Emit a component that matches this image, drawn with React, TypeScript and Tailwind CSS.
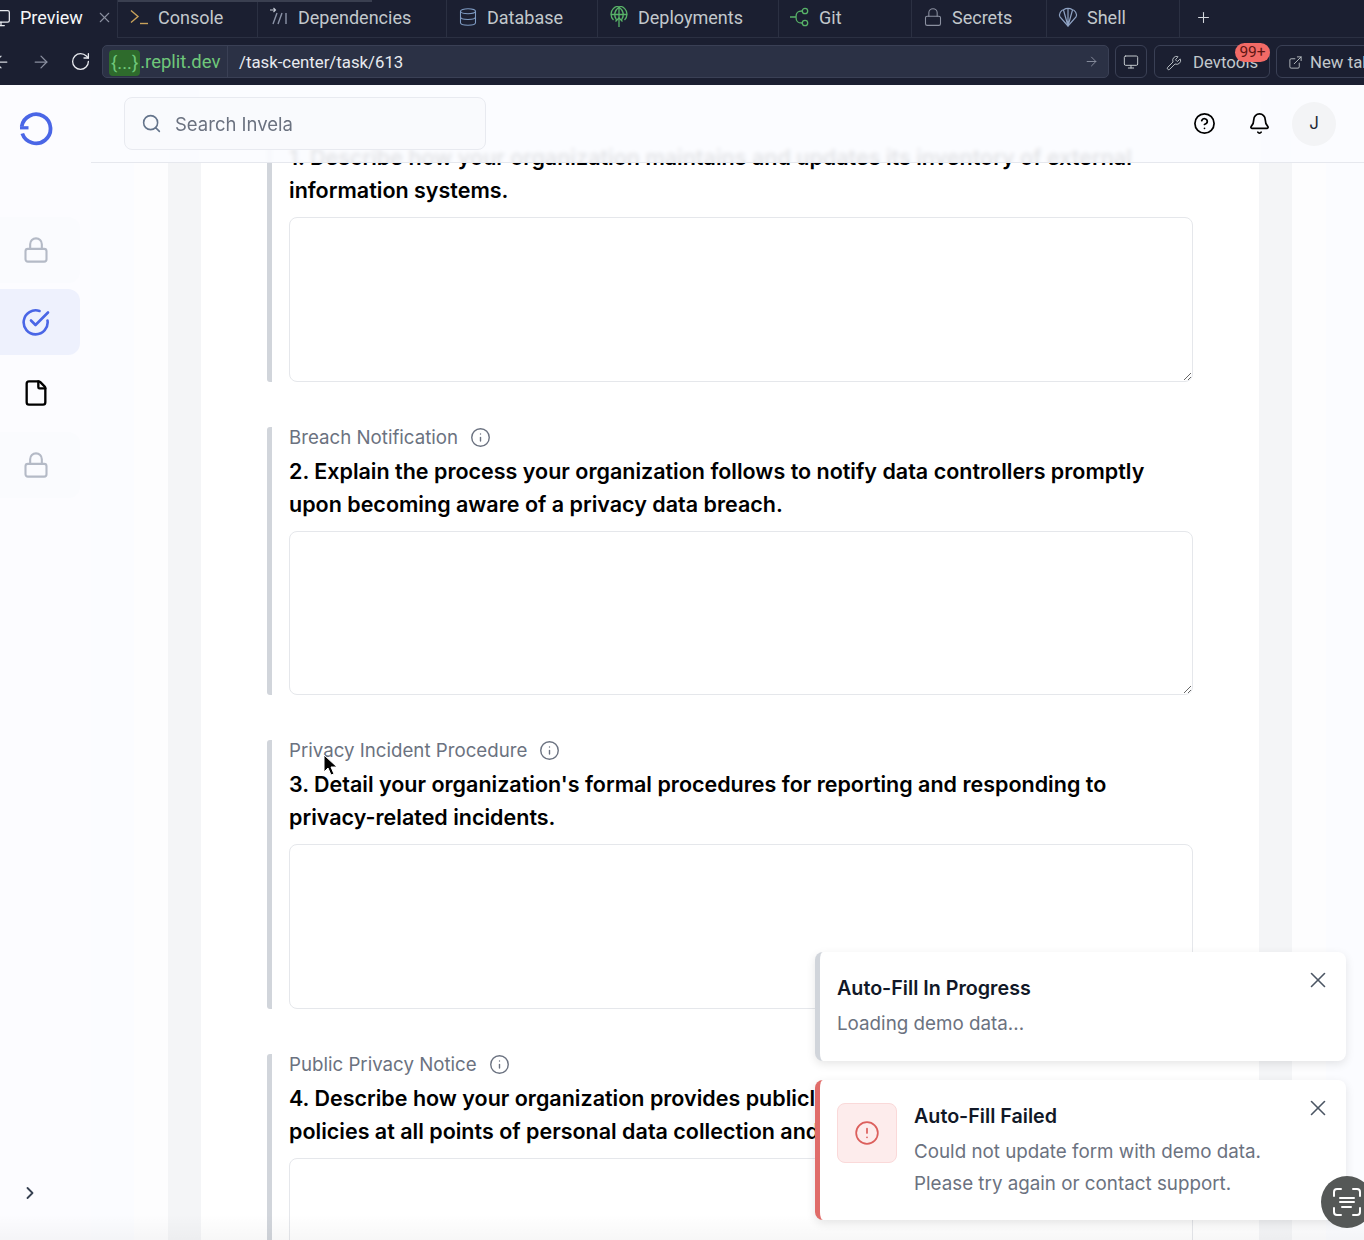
import type { ReactNode } from "react";
import {
  ArrowLeft,
  ArrowRight,
  Bell,
  ChevronRight,
  CircleAlert,
  CircleHelp,
  Database,
  ExternalLink,
  File,
  Info,
  Lock,
  Monitor,
  Plus,
  RotateCw,
  Search,
  Wrench,
  X,
} from "lucide-react";

const questions = [
  {
    label: "Data Inventory",
    text: "1. Describe how your organization maintains and updates its inventory of external information systems.",
  },
  {
    label: "Breach Notification",
    text: "2. Explain the process your organization follows to notify data controllers promptly upon becoming aware of a privacy data breach.",
  },
  {
    label: "Privacy Incident Procedure",
    text: "3. Detail your organization's formal procedures for reporting and responding to privacy-related incidents.",
  },
  {
    label: "Public Privacy Notice",
    text: "4. Describe how your organization provides publicly available and accessible privacy policies at all points of personal data collection and processing.",
  },
];

function ConsoleIcon() {
  return (
    <svg width="20" height="20" viewBox="0 0 20 20" fill="none" stroke="#c9a25a" strokeWidth="1.4">
      <path d="M2 3.5 9 9.5 2 15.5" />
      <path d="M11 16.5h8" />
    </svg>
  );
}

function DependenciesIcon() {
  return (
    <svg width="20" height="20" viewBox="0 0 20 20" fill="none" stroke="#8b93a7" strokeWidth="1.4">
      <path d="M8 6 4 17M13 6 9 17M17 6v11" />
      <path d="M1 3h5M4.500 1 6.500 3 4.500 5" stroke="#c4c9d4" strokeWidth="1.1" />
    </svg>
  );
}

function DeployIcon() {
  return (
    <svg width="20" height="22" viewBox="0 0 20 22" fill="none" stroke="#58b368" strokeWidth="1.3">
      <path d="M4.500 14a8 8 0 1 1 11 0" />
      <path d="M2 8.500h16M10 1v20M10 1c-5 4-5 9-2.500 13M10 1c5 4 5 9 2.500 13" />
      <path d="M6.500 15.500 10 12l3.500 3.500" />
    </svg>
  );
}

function GitIcon() {
  return (
    <svg width="20" height="20" viewBox="0 0 20 20" fill="none" stroke="#58b368" strokeWidth="1.3">
      <path d="M0 10h6M6 10c0-5 2-6 6-6M6 10c0 5 2 6 6 6" />
      <circle cx="15" cy="4" r="2.700" />
      <circle cx="15" cy="16" r="2.700" />
    </svg>
  );
}

function ShellIcon() {
  return (
    <svg width="20" height="20" viewBox="0 0 20 20" fill="none" stroke="#8fa3c4" strokeWidth="1.2">
      <path d="M10 19 2 10C.5 7 3 3 6 2.500 8 1 12 1 14 2.500 17 3 19.500 7 18 10Z" />
      <path d="M10 19 5.500 3M10 19V1.500M10 19l4.500-16" />
    </svg>
  );
}

function LogoMark() {
  return (
    <svg width="34" height="34" viewBox="0 0 34 34" fill="none">
      <path d="M2.700 14.500A14.500 14.500 0 1 1 3.300 21.500" stroke="#4a66e6" strokeWidth="3.800" />
      <path d="M1 14.200h8.500v3.200H1z" fill="#4a66e6" />
    </svg>
  );
}

function CheckIcon() {
  return (
    <svg width="28" height="28" viewBox="0 0 28 28" fill="none" stroke="#4a66e6" strokeWidth="2.600" strokeLinecap="round" strokeLinejoin="round">
      <path d="M25.500 12.500A12 12 0 1 1 17.500 3" />
      <path d="M9 12.500 13.500 17 26 4.500" />
    </svg>
  );
}

function ScanIcon() {
  return (
    <svg width="30" height="30" viewBox="0 0 30 30" fill="none" stroke="#ffffff" strokeWidth="2" strokeLinecap="round">
      <path d="M2 9V5a3 3 0 0 1 3-3h4M21 2h4a3 3 0 0 1 3 3v4M28 21v4a3 3 0 0 1-3 3h-4M9 28H5a3 3 0 0 1-3-3v-4" />
      <path d="M8 11h14M8 15h14M10 20h9" />
    </svg>
  );
}

function Tab({ width, icon, label }: { width: string; icon: ReactNode; label: string }) {
  return (
    <div className={`flex h-[38px] shrink-0 items-center gap-[9px] border-r border-b border-[#2b3042] pb-[3px] pl-[11px] ${width}`}>
      {icon}
      <span className="text-[#c2c8cc]">{label}</span>
    </div>
  );
}

function TopBar() {
  return (
    <div className="relative h-[85px] shrink-0 overflow-hidden bg-[#1b1f31] font-['Roboto',sans-serif] text-[18px]">
      <div className="absolute left-[118px] top-0 h-[2px] w-[254px] bg-[#3a3f50]" />
      <div className="-ml-[11px] flex w-[1375px]">
        <div className="flex h-[38px] w-[129px] shrink-0 items-center gap-[9px] border-r border-[#2b3042] pb-[3px] pl-[2px]">
          <Monitor className="h-[20px] w-[20px] text-[#e8eaef]" strokeWidth={1.500} />
          <span className="text-[#f5f6f8]">Preview</span>
          <X className="ml-[4px] h-[17px] w-[17px] text-[#8b90a0]" strokeWidth={1.500} />
        </div>
        <Tab width="w-[140px]" icon={<ConsoleIcon />} label="Console" />
        <Tab width="w-[189px]" icon={<DependenciesIcon />} label="Dependencies" />
        <Tab width="w-[151px]" icon={<Database className="h-[20px] w-[20px] text-[#7f9cc4]" strokeWidth={1.300} />} label="Database" />
        <Tab width="w-[181px]" icon={<DeployIcon />} label="Deployments" />
        <Tab width="w-[133px]" icon={<GitIcon />} label="Git" />
        <Tab width="w-[135px]" icon={<Lock className="h-[20px] w-[20px] text-[#8b90a0]" strokeWidth={1.300} />} label="Secrets" />
        <Tab width="w-[133px]" icon={<ShellIcon />} label="Shell" />
        <div className="flex h-[38px] flex-1 items-center border-b border-[#2b3042] pb-[3px] pl-[15px]">
          <Plus className="h-[17px] w-[17px] text-[#d5d8de]" strokeWidth={1.500} />
        </div>
      </div>

      <div className="-ml-[9px] mt-[7px] flex h-[33px] w-[1420px] items-center text-[16.800px]">
        <ArrowLeft className="h-[20px] w-[20px] shrink-0 text-[#d5d8de]" strokeWidth={1.500} />
        <ArrowRight className="ml-[20px] h-[20px] w-[20px] shrink-0 text-[#8b90a0]" strokeWidth={1.500} />
        <RotateCw className="ml-[19px] h-[21px] w-[21px] shrink-0 text-[#e8eaef]" strokeWidth={1.500} />
        <div className="ml-[11px] flex h-full w-[1007px] shrink-0 items-center rounded-[5px] border border-[#3a4055] bg-[#2b3145]">
          <div className="flex h-full w-[125px] shrink-0 items-center border-r border-[#3a4055] pl-[6px] pt-[2px] text-[18.500px] text-[#6fc77a]">
            <span className="rounded-[4px] bg-[#2e6b2c] px-[2px] leading-[26px]">{"{...}"}</span>
            <span>.replit.dev</span>
          </div>
          <span className="ml-[11px] pt-[2px] text-[#e8eaef]">/task-center/task/613</span>
          <ArrowRight className="ml-auto mr-[9px] h-[15px] w-[15px] text-[#8b90a0]" strokeWidth={1.500} />
        </div>
        <div className="ml-[6px] flex h-full w-[32px] shrink-0 items-center justify-center rounded-[6px] border border-[#3a4055]">
          <Monitor className="h-[16px] w-[16px] text-[#c2c8cc]" strokeWidth={1.500} />
        </div>
        <div className="relative ml-[7px] flex h-full w-[116px] shrink-0 items-center gap-[11px] rounded-[6px] border border-[#3a4055] pl-[11px] pt-[2px] text-[#c2c8cc]">
          <Wrench className="h-[16px] w-[16px] shrink-0" strokeWidth={1.400} />
          <span>Devtools</span>
          <span className="absolute -top-[3px] -right-px flex h-[19px] w-[35px] items-center justify-center rounded-full bg-[#f26a66] text-[15.500px] text-[#5f1714]">
            99+
          </span>
        </div>
        <div className="ml-[6px] flex h-full w-[110px] shrink-0 items-center gap-[7px] rounded-[6px] border border-[#3a4055] pl-[11px] pt-[2px] text-[#c2c8cc]">
          <ExternalLink className="h-[15px] w-[15px] shrink-0" strokeWidth={1.400} />
          <span>New tab</span>
        </div>
      </div>
    </div>
  );
}

function NavItem({ children, active, plain }: { children: ReactNode; active?: boolean; plain?: boolean }) {
  return (
    <div
      className={`flex h-[66px] w-[80px] items-center justify-center rounded-r-[12px] ${
        active ? "bg-[#eef1fd]" : plain ? "" : "bg-[#fafbfe]"
      }`}
    >
      <div className="-ml-[8px] flex">{children}</div>
    </div>
  );
}

function Sidebar() {
  return (
    <div className="flex w-[91px] shrink-0 flex-col bg-[#fcfcff]">
      <div className="flex h-[132px] items-start pl-[19px] pt-[27px]">
        <LogoMark />
      </div>
      <div className="flex flex-col gap-[5.500px]">
        <NavItem>
          <Lock className="h-[28px] w-[28px] text-[#b4bac6]" strokeWidth={1.800} />
        </NavItem>
        <NavItem active>
          <CheckIcon />
        </NavItem>
        <NavItem plain>
          <File className="h-[28px] w-[28px] text-black" strokeWidth={2} />
        </NavItem>
        <NavItem>
          <Lock className="h-[28px] w-[28px] text-[#b4bac6]" strokeWidth={1.800} />
        </NavItem>
      </div>
      <div className="mt-auto pb-[37px] pl-[20px]">
        <ChevronRight className="h-[20px] w-[20px] text-[#374151]" strokeWidth={2.200} />
      </div>
    </div>
  );
}

function Header() {
  return (
    <div className="absolute left-0 right-0 top-0 z-10 flex h-[78px] items-center justify-between border-b border-[#e6e8ee] bg-[#fbfcff]/90 pl-[33px] pr-[28px] backdrop-blur-[2px]">
      <div className="flex h-[53px] w-[362px] items-center rounded-[8px] border border-[#e8eaf0] bg-[#f9fafd] pl-[16px]">
        <Search className="h-[21px] w-[21px] text-[#64748b]" strokeWidth={1.800} />
        <span className="ml-[13px] pt-[2px] text-[18.500px] text-[#6b7280]">Search Invela</span>
      </div>
      <div className="flex items-center">
        <CircleHelp className="h-[23px] w-[23px] text-black" strokeWidth={1.800} />
        <Bell className="ml-[32px] h-[23px] w-[23px] text-black" strokeWidth={1.800} />
        <div className="ml-[21px] flex h-[44px] w-[44px] items-center justify-center rounded-full bg-[#f3f4f6] text-[17px] text-[#1f2937]">
          J
        </div>
      </div>
    </div>
  );
}

function Question({ label, text }: { label: string; text: string }) {
  return (
    <section className="rounded-[3px] border-l-[5px] border-[#d1d5db] pl-[17px]">
      <div className="flex h-[28px] items-start gap-[12px] text-[18.700px] leading-[22px] text-[#6b7280]">
        <span>{label}</span>
        <Info className="h-[21px] w-[21px]" strokeWidth={1.600} />
      </div>
      <h2 className="text-[21.500px] font-semibold leading-[33px] text-black">{text}</h2>
      <textarea className="mt-[10px] block h-[164.500px] w-full rounded-[8px] border border-[#e5e7eb] bg-white" />
    </section>
  );
}

function Toast({ title, lines, tone }: { title: string; lines: string[]; tone: "neutral" | "error" }) {
  const isError = tone === "error";
  return (
    <div
      className={`relative flex rounded-[8px] border-l-[5px] bg-white pl-[17px] pt-[23px] shadow-[0_3px_10px_rgba(0,0,0,0.1)] ${
        isError ? "h-[140px] border-[#e06c69]" : "h-[109px] border-[#d1d5db]"
      }`}
    >
      {isError && (
        <div className="mr-[17px] flex h-[60px] w-[60px] items-center justify-center rounded-[8px] border border-[#fad9d9] bg-[#fdecec]">
          <CircleAlert className="h-[26px] w-[26px] text-[#dc5f5c]" strokeWidth={1.600} />
        </div>
      )}
      <div>
        <p className="text-[19.700px] font-semibold leading-[26px] text-[#111827]">{title}</p>
        <div className="mt-[7px] text-[18.800px] leading-[32px] text-[#6b7280]">
          {lines.map((line) => (
            <p key={line}>{line}</p>
          ))}
        </div>
      </div>
      <X className="absolute right-[15px] top-[15px] h-[26px] w-[26px] text-[#4b5563]" strokeWidth={1.500} />
    </div>
  );
}

export default function App() {
  return (
    <div className="flex h-[1240px] w-[1364px] flex-col overflow-hidden bg-white font-['Inter',sans-serif]">
      <TopBar />
      <div className="relative flex min-h-0 flex-1">
        <Sidebar />
        <main className="relative min-w-0 flex-1 overflow-hidden">
          <Header />
          <div className="h-full bg-[#fbfcff] pl-[43px] pr-[38px]">
            <div className="h-full bg-[#fdfdfe] px-[34px]">
              <div className="h-full bg-[#f4f5f7] px-[33px]">
                <div className="flex h-full flex-col gap-[45px] bg-white px-[66px] pt-[28px]">
                  {questions.map((question) => (
                    <Question key={question.label} label={question.label} text={question.text} />
                  ))}
                </div>
              </div>
            </div>
          </div>
        </main>

        <div className="pointer-events-none absolute bottom-0 left-0 right-0 h-[26px] bg-gradient-to-b from-transparent to-black/[0.03]" />

        {/* cursor from the recording */}
        <svg className="absolute left-[322px] top-[669px]" width="16" height="23" viewBox="0 0 16 23">
          <path d="M2 1v17l4-4 3 7 3-1-3-7h6Z" fill="#000000" stroke="#ffffff" strokeWidth="1" />
        </svg>

        <div className="absolute left-[815px] top-[867px] flex w-[531px] flex-col gap-[19px]">
          <Toast title="Auto-Fill In Progress" lines={["Loading demo data..."]} tone="neutral" />
          <Toast
            title="Auto-Fill Failed"
            lines={["Could not update form with demo data.", "Please try again or contact support."]}
            tone="error"
          />
        </div>

        <div className="absolute left-[1321px] top-[1091px] flex h-[52px] w-[52px] items-center justify-center rounded-full bg-[#555857]">
          <ScanIcon />
        </div>
      </div>
    </div>
  );
}
